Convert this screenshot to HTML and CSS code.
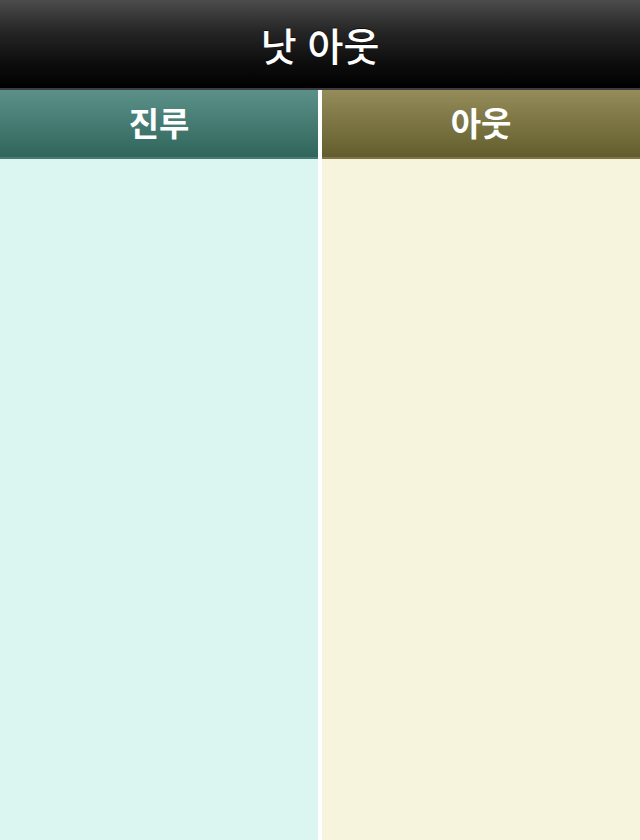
FILE: index.html
```html
<!DOCTYPE html>
<html lang="ko">
<head>
<meta charset="utf-8">
<title>낫 아웃</title>
<link rel="stylesheet" href="styles.css">
</head>
<body>
<div class="app">
  <header class="topbar"><h1 class="title">낫 아웃</h1></header>
  <div class="columns">
    <section class="col col-safe">
      <div class="col-head">진루</div>
      <div class="col-body"></div>
    </section>
    <div class="divider"></div>
    <section class="col col-out">
      <div class="col-head">아웃</div>
      <div class="col-body"></div>
    </section>
  </div>
</div>
</body>
</html>
```
FILE: styles.css
```css
html, body {
  margin: 0;
  padding: 0;
  height: 100%;
  background: #ffffff;
}
body {
  font-family: "Noto Sans CJK KR", "Noto Sans", sans-serif;
}
.app {
  display: flex;
  flex-direction: column;
  height: 840px;
  width: 640px;
  overflow: hidden;
}
.topbar {
  height: 88px;
  flex: none;
  display: flex;
  align-items: center;
  justify-content: center;
  background: linear-gradient(to bottom, #4c4c4c 0%, #262626 35%, #0e0e0e 70%, #000000 100%);
  border-bottom: 2px solid #3d3b40;
}
.title {
  margin: 0;
  color: #ffffff;
  font-size: 39px;
  font-weight: 500;
  line-height: 1;
  text-shadow: 0 -1px 0 rgba(0,0,0,0.6);
}
.columns {
  flex: 1;
  display: flex;
}
.col {
  flex: 1;
  display: flex;
  flex-direction: column;
}
.divider {
  width: 4px;
  flex: none;
  background: #ffffff;
}
.col-head {
  height: 69px;
  flex: none;
  display: flex;
  align-items: center;
  justify-content: center;
  padding-bottom: 3px;
  box-sizing: border-box;
  color: #ffffff;
  font-size: 33px;
  font-weight: 700;
  line-height: 1;
}
.col-safe .col-head {
  background: linear-gradient(to bottom, #5c918a 0%, #2f655a 100%);
  border-bottom: 2px solid #4b7a72;
}
.col-out .col-head {
  background: linear-gradient(to bottom, #948c59 0%, #635d2d 100%);
  border-bottom: 2px solid #7d7647;
}
.col-body {
  flex: 1;
}
.col-safe .col-body {
  background: #dbf6f1;
}
.col-out .col-body {
  background: #f6f4dc;
}
```
